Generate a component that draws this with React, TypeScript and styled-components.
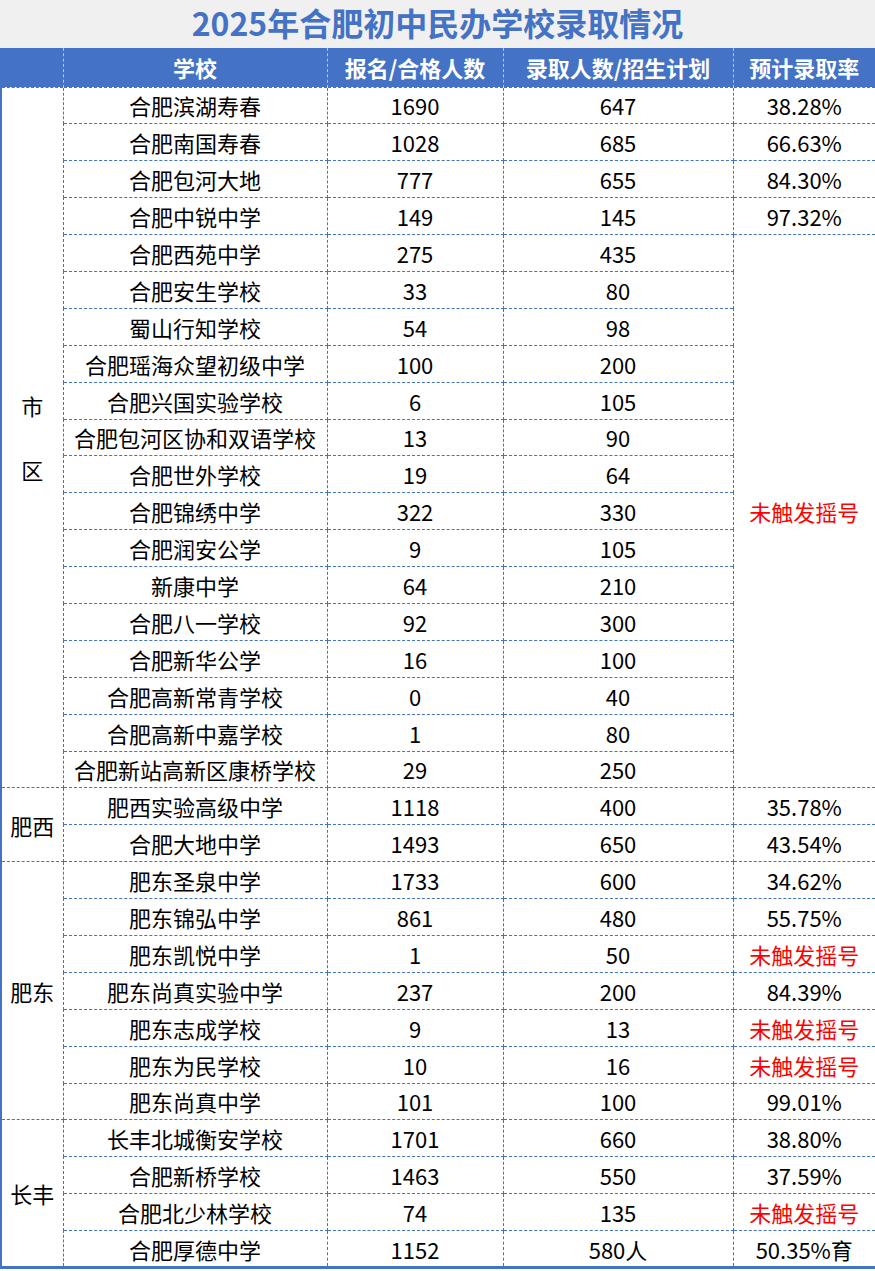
import styled, { createGlobalStyle } from "styled-components";

const BLUE = "#4472C4";

type Row = {
  school: string;
  applied: string;
  admitted: string;
  rate?: string;
  red?: boolean;
  span?: number;
  skipRate?: boolean;
};

type Group = { label: string[]; rows: Row[] };

const NO_LOTTERY = "未触发摇号";

const groups: Group[] = [
  {
    label: ["市", "", "区"],
    rows: [
      { school: "合肥滨湖寿春", applied: "1690", admitted: "647", rate: "38.28%" },
      { school: "合肥南国寿春", applied: "1028", admitted: "685", rate: "66.63%" },
      { school: "合肥包河大地", applied: "777", admitted: "655", rate: "84.30%" },
      { school: "合肥中锐中学", applied: "149", admitted: "145", rate: "97.32%" },
      { school: "合肥西苑中学", applied: "275", admitted: "435", rate: NO_LOTTERY, red: true, span: 15 },
      { school: "合肥安生学校", applied: "33", admitted: "80", skipRate: true },
      { school: "蜀山行知学校", applied: "54", admitted: "98", skipRate: true },
      { school: "合肥瑶海众望初级中学", applied: "100", admitted: "200", skipRate: true },
      { school: "合肥兴国实验学校", applied: "6", admitted: "105", skipRate: true },
      { school: "合肥包河区协和双语学校", applied: "13", admitted: "90", skipRate: true },
      { school: "合肥世外学校", applied: "19", admitted: "64", skipRate: true },
      { school: "合肥锦绣中学", applied: "322", admitted: "330", skipRate: true },
      { school: "合肥润安公学", applied: "9", admitted: "105", skipRate: true },
      { school: "新康中学", applied: "64", admitted: "210", skipRate: true },
      { school: "合肥八一学校", applied: "92", admitted: "300", skipRate: true },
      { school: "合肥新华公学", applied: "16", admitted: "100", skipRate: true },
      { school: "合肥高新常青学校", applied: "0", admitted: "40", skipRate: true },
      { school: "合肥高新中嘉学校", applied: "1", admitted: "80", skipRate: true },
      { school: "合肥新站高新区康桥学校", applied: "29", admitted: "250", skipRate: true },
    ],
  },
  {
    label: ["肥西"],
    rows: [
      { school: "肥西实验高级中学", applied: "1118", admitted: "400", rate: "35.78%" },
      { school: "合肥大地中学", applied: "1493", admitted: "650", rate: "43.54%" },
    ],
  },
  {
    label: ["肥东"],
    rows: [
      { school: "肥东圣泉中学", applied: "1733", admitted: "600", rate: "34.62%" },
      { school: "肥东锦弘中学", applied: "861", admitted: "480", rate: "55.75%" },
      { school: "肥东凯悦中学", applied: "1", admitted: "50", rate: NO_LOTTERY, red: true },
      { school: "肥东尚真实验中学", applied: "237", admitted: "200", rate: "84.39%" },
      { school: "肥东志成学校", applied: "9", admitted: "13", rate: NO_LOTTERY, red: true },
      { school: "肥东为民学校", applied: "10", admitted: "16", rate: NO_LOTTERY, red: true },
      { school: "肥东尚真中学", applied: "101", admitted: "100", rate: "99.01%" },
    ],
  },
  {
    label: ["长丰"],
    rows: [
      { school: "长丰北城衡安学校", applied: "1701", admitted: "660", rate: "38.80%" },
      { school: "合肥新桥学校", applied: "1463", admitted: "550", rate: "37.59%" },
      { school: "合肥北少林学校", applied: "74", admitted: "135", rate: NO_LOTTERY, red: true },
      { school: "合肥厚德中学", applied: "1152", admitted: "580人", rate: "50.35%育" },
    ],
  },
];

function App() {
  return (
    <Page>
      <GlobalStyle />
      <Title>2025年合肥初中民办学校录取情况</Title>
      <Sheet>
        <colgroup>
          <col style={{ width: 62 }} />
          <col style={{ width: 264 }} />
          <col style={{ width: 176 }} />
          <col style={{ width: 230 }} />
          <col style={{ width: 143 }} />
        </colgroup>
        <thead>
          <HeadRow>
            <HeadCell />
            <HeadCell>学校</HeadCell>
            <HeadCell>报名/合格人数</HeadCell>
            <HeadCell>录取人数/招生计划</HeadCell>
            <HeadCell>预计录取率</HeadCell>
          </HeadRow>
        </thead>
        <tbody>
          {groups.map((group) =>
            group.rows.map((row, i) => (
              <BodyRow key={row.school}>
                {i === 0 && (
                  <GroupCell rowSpan={group.rows.length}>
                    {group.label.map((line, j) => (
                      <GroupLine key={j}>{line || "\u00a0"}</GroupLine>
                    ))}
                  </GroupCell>
                )}
                <Cell>{row.school}</Cell>
                <Cell>{row.applied}</Cell>
                <Cell>{row.admitted}</Cell>
                {!row.skipRate && (
                  <Cell rowSpan={row.span} $red={row.red}>
                    {row.rate}
                  </Cell>
                )}
              </BodyRow>
            ))
          )}
        </tbody>
      </Sheet>
    </Page>
  );
}

const GlobalStyle = createGlobalStyle`
  body {
    margin: 0;
    background: #ffffff;
    font-family: "Noto Sans CJK SC", "Noto Sans", sans-serif;
    color: #000000;
  }
`;

const Page = styled.div`
  width: 875px;
`;

const Title = styled.h1`
  margin: 0;
  height: 48px;
  line-height: 45px;
  background: #f0f0f0;
  color: ${BLUE};
  font-size: 32px;
  font-weight: 700;
  text-align: center;
`;

const Sheet = styled.table`
  width: 875px;
  table-layout: fixed;
  border-collapse: collapse;
  border-left: 2px solid ${BLUE};
  border-right: 2px solid ${BLUE};
  border-bottom: 3px solid ${BLUE};
`;

const HeadRow = styled.tr`
  height: 39px;
  background: ${BLUE};
`;

const HeadCell = styled.th`
  padding: 0;
  color: #ffffff;
  font-size: 22px;
  font-weight: 700;
  text-align: center;
  white-space: nowrap;
  border-left: 1px dashed rgba(255, 255, 255, 0.6);
  border-right: 1px dashed rgba(255, 255, 255, 0.6);
  &:first-child {
    border-left: 2px solid ${BLUE};
  }
  &:last-child {
    border-right: 2px solid ${BLUE};
  }
`;

const BodyRow = styled.tr`
  height: 36.9px;
`;

const Cell = styled.td<{ $red?: boolean }>`
  padding: 0;
  border: 1px dashed ${BLUE};
  font-size: 22px;
  line-height: 26px;
  text-align: center;
  white-space: nowrap;
  color: ${({ $red }) => ($red ? "#ff0000" : "#000000")};
`;

const GroupCell = styled.td`
  padding: 0;
  border: 1px dashed ${BLUE};
  font-size: 22px;
  text-align: center;
  vertical-align: middle;
`;

const GroupLine = styled.div`
  line-height: 32px;
`;

export default App;
